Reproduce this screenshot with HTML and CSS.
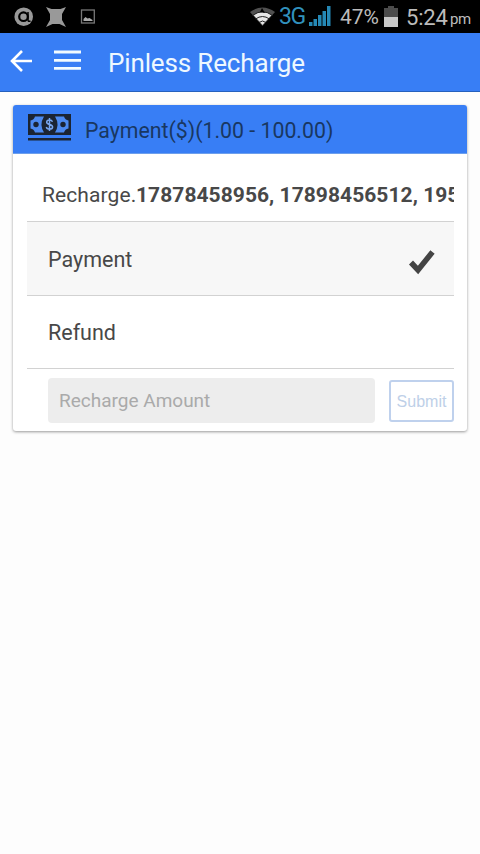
FILE: index.html
```html
<!DOCTYPE html>
<html lang="en">
<head>
<meta charset="utf-8">
<title>Pinless Recharge</title>
<link rel="stylesheet" href="styles.css">
</head>
<body>
<header class="status">
  <div class="notices">
    <svg width="100" height="33" viewBox="0 0 100 33">
      <circle cx="23.7" cy="16.7" r="9.3" fill="#999"/>
      <circle cx="23.5" cy="16.7" r="4.3" fill="none" stroke="#000" stroke-width="2.2"/>
      <path d="M28 12v8q0 2 2.500 1" fill="none" stroke="#000" stroke-width="1.500"/>
      <path d="M46 7 51.500 9h9L66 7l-4 7v6l4 7-6.500-3h-7L46 27l4-7v-6z" fill="#999"/>
      <rect x="81.500" y="10" width="12.800" height="13" fill="none" stroke="#777" stroke-width="1.300"/>
      <path d="M83.500 21v-2l2-2 2 1.500 2-.5 3 2v1z" fill="#aaa"/>
    </svg>
  </div>
  <svg class="wifi" width="27" height="22" viewBox="0 0 27 22">
    <path d="M1 6Q13.500-3 26 6L13.500 20z" fill="#505050"/>
    <path d="M4.500 9Q13.500 3 22.500 9L13.500 19z" fill="#e6e6e6"/>
    <path d="M3.500 9.500Q13.500 2 23.500 9.500M6.500 13q7-5 14 0M10 16.500q3.500-3 7 0" fill="none" stroke="#222" stroke-width="1"/>
    <path d="M11 6l2-4 3 5z" fill="#000"/>
  </svg>
  <span class="network">3G</span>
  <svg class="signal" width="22" height="22" viewBox="0 0 22 22">
    <path d="M0 17h3.500v4H0zM4.500 14H8v7H4.500zM9 10h3.500v11H9zM13.500 6H17v15h-3.500zM18 1h3.500v20H18z" fill="#2588b5"/>
  </svg>
  <span class="percent">47%</span>
  <svg class="battery" width="14" height="21" viewBox="0 0 14 21">
    <path d="M4 0h6v2h4v9H0V2h4z" fill="#4c4c4c"/><path d="M0 11h14v10H0z" fill="#c8c8c8"/>
  </svg>
  <span class="clock">5:24</span><span class="ampm">pm</span>
</header>
<nav class="bar">
  <svg class="back" width="23" height="22" viewBox="0 0 23 22"><path d="M22 11H2M12 1 2 11l10 10" fill="none" stroke="#fff" stroke-width="2.600"/></svg>
  <svg class="menu" width="27" height="21" viewBox="0 0 27 21"><path d="M0 2h27M0 10.300h27M0 18.300h27" stroke="#f2fbff" stroke-width="2.800"/></svg>
  <h1 class="title">Pinless Recharge</h1>
</nav>
<main class="card">
  <div class="card-head">
    <svg class="cash" width="43" height="27" viewBox="0 0 43 27">
      <path d="M0 0h43v21H0zM0 24h43v2.400H0z" fill="#1b2432"/>
      <path d="M7 2.500h9Q11 10.500 16 18.500H7Q6 15 2.500 14.500v-8Q6 6 7 2.500zM36 2.500h-9q5 8 0 16h9q1-3.500 4.500-4v-8q-3.500-.5-4.500-4z" fill="#4c8af0"/>
      <circle cx="8" cy="10.500" r="2.700" fill="#1b2432"/><circle cx="35" cy="10.500" r="2.700" fill="#1b2432"/>
      <path d="M24.500 7.800Q23.800 6 21.500 6q-2.800 0-2.800 2.200c0 2.900 5.900 1.700 5.900 4.700q0 2.200-3.100 2.200-2.600 0-3.200-2.100M21.500 4v13" fill="none" stroke="#78a6ee" stroke-width="1.500"/>
    </svg>
    <span class="head-text">Payment($)(1.00 - 100.00)</span>
  </div>
  <div class="list">
    <div class="numbers"><span class="label">Recharge.</span><strong class="value">17878458956, 17898456512, 195</strong></div>
    <div class="row selected"><span class="option">Payment</span>
      <svg class="check" width="28" height="26" viewBox="0 0 28 26"><path d="M3 13.500 10 21 24.500 3" fill="none" stroke="#444" stroke-width="5.500"/></svg>
    </div>
    <div class="row"><span class="option">Refund</span></div>
    <div class="form">
      <input class="amount" type="text" placeholder="Recharge Amount">
      <button class="submit" disabled>Submit</button>
    </div>
  </div>
</main>
</body>
</html>
```
FILE: styles.css
```css
* { box-sizing: border-box; }
body { margin: 0; min-height: 854px; background: #fdfdfd; font-family: Roboto, "Liberation Sans", sans-serif; color: #484848; }
svg { display: block; flex: none; }
span, h1, strong { white-space: nowrap; }
.status { display: flex; height: 33px; background: #000; color: #bcbcbc; overflow: hidden; }
.notices { width: 249px; flex: none; }
.wifi { margin-top: 6px; }
.network { width: 27px; margin-left: 3px; font-size: 23px; line-height: 33px; color: #3191bd; letter-spacing: -1.500px; }
.signal { margin: 5px 0 0 3px; }
.percent { width: 42px; margin-left: 9px; font-size: 21px; line-height: 35px; }
.battery { margin: 6px 0 0 2px; }
.clock { width: 43px; margin-left: 8px; font-size: 22px; line-height: 35px; letter-spacing: -.2px; }
.ampm { font-size: 15px; line-height: 39px; margin-left: 1px; letter-spacing: -.3px; }
.bar { display: flex; height: 59px; background: #387ef5; border-bottom: 1px solid #2560bd; }
.back { margin: 17px 0 0 10px; }
.menu { margin: 17px 0 0 21px; }
.title { margin: 0 0 0 27px; font-size: 26px; font-weight: 400; line-height: 60px; letter-spacing: -.15px; color: #eef8ff; }
.card { margin: 13px 13px 0; height: 326px; background: #fff; border-radius: 3px; box-shadow: 0 1px 3px rgba(0,0,0,.4); overflow: hidden; }
.card-head { display: flex; height: 49px; padding-left: 15px; background: #387ef5; border-bottom: 1px solid #6d9fec; }
.cash { margin-top: 9px; }
.head-text { margin-left: 14px; font-size: 21.300px; line-height: 51px; color: #193761; }
.list { margin: 0 13px 0 14px; }
.numbers { display: flex; height: 68px; padding-left: 15px; border-bottom: 1px solid #d2d2d2; font-size: 21px; line-height: 83px; overflow: hidden; }
.label { width: 94px; flex: none; letter-spacing: .1px; }
.value { min-width: 0; overflow: hidden; letter-spacing: .05px; }
.row { display: flex; justify-content: space-between; height: 73px; padding: 0 18px 0 21px; border-bottom: 1px solid #d2d2d2; font-size: 21.500px; line-height: 74px; }
.selected { background: #f7f7f7; height: 74px; line-height: 75px; }
.check { margin-top: 27px; }
.form { display: flex; height: 62px; padding: 9px 0 0 21px; }
.amount { width: 327px; height: 45px; padding: 0 11px; border: 0; border-radius: 4px; background: #ededed; font: 19px Roboto, sans-serif; }
.amount::placeholder { color: #aaa; opacity: 1; }
.submit { width: 65px; height: 42px; margin: 2px 0 0 14px; padding: 1px 0 0; border: 2px solid #bfd1ed; border-radius: 3px; background: #fff; color: #bed0e8; font: 16px "Liberation Sans", Arial, sans-serif; }
```
